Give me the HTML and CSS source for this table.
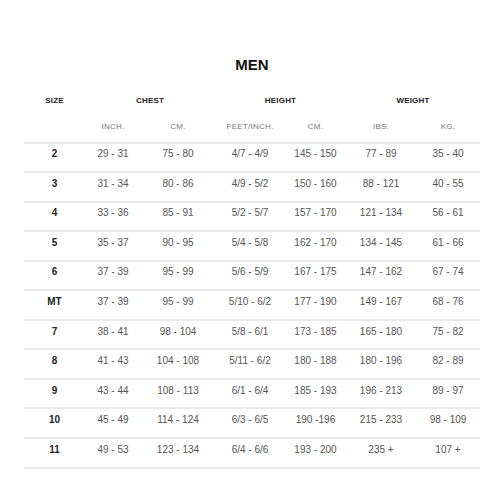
FILE: index.html
```html
<!DOCTYPE html>
<html>
<head>
<meta charset="utf-8">
<link rel="stylesheet" href="styles.css">
</head>
<body>
<div class="chart">
  <h1 class="title">MEN</h1>
  <div class="row head">
    <div>SIZE</div>
    <div class="span2">CHEST</div>
    <div class="span2">HEIGHT</div>
    <div class="span2">WEIGHT</div>
  </div>
  <div class="row sub">
    <div></div>
    <div>INCH.</div>
    <div>CM.</div>
    <div>FEET/INCH.</div>
    <div>CM.</div>
    <div>IBS.</div>
    <div>KG.</div>
  </div>
  <div class="body">
    <div class="row data"><div class="size">2</div><div>29 - 31</div><div>75 - 80</div><div>4/7 - 4/9</div><div>145 - 150</div><div>77 - 89</div><div>35 - 40</div></div>
    <div class="row data"><div class="size">3</div><div>31 - 34</div><div>80 - 86</div><div>4/9 - 5/2</div><div>150 - 160</div><div>88 - 121</div><div>40 - 55</div></div>
    <div class="row data"><div class="size">4</div><div>33 - 36</div><div>85 - 91</div><div>5/2 - 5/7</div><div>157 - 170</div><div>121 - 134</div><div>56 - 61</div></div>
    <div class="row data"><div class="size">5</div><div>35 - 37</div><div>90 - 95</div><div>5/4 - 5/8</div><div>162 - 170</div><div>134 - 145</div><div>61 - 66</div></div>
    <div class="row data"><div class="size">6</div><div>37 - 39</div><div>95 - 99</div><div>5/6 - 5/9</div><div>167 - 175</div><div>147 - 162</div><div>67 - 74</div></div>
    <div class="row data"><div class="size">MT</div><div>37 - 39</div><div>95 - 99</div><div>5/10 - 6/2</div><div>177 - 190</div><div>149 - 167</div><div>68 - 76</div></div>
    <div class="row data"><div class="size">7</div><div>38 - 41</div><div>98 - 104</div><div>5/8 - 6/1</div><div>173 - 185</div><div>165 - 180</div><div>75 - 82</div></div>
    <div class="row data"><div class="size">8</div><div>41 - 43</div><div>104 - 108</div><div>5/11 - 6/2</div><div>180 - 188</div><div>180 - 196</div><div>82 - 89</div></div>
    <div class="row data"><div class="size">9</div><div>43 - 44</div><div>108 - 113</div><div>6/1 - 6/4</div><div>185 - 193</div><div>196 - 213</div><div>89 - 97</div></div>
    <div class="row data"><div class="size">10</div><div>45 - 49</div><div>114 - 124</div><div>6/3 - 6/5</div><div>190 -196</div><div>215 - 233</div><div>98 - 109</div></div>
    <div class="row data last"><div class="size">11</div><div>49 - 53</div><div>123 - 134</div><div>6/4 - 6/6</div><div>193 - 200</div><div>235 +</div><div>107 +</div></div>
  </div>
</div>
</body>
</html>
```

FILE: styles.css
```css
html, body {
  margin: 0;
  padding: 0;
  background: #ffffff;
}

body {
  font-family: "Liberation Sans", Arial, sans-serif;
}

.chart {
  width: 456px;
  margin: 0 0 0 24px;
}

.title {
  margin: 56px 0 0;
  font-size: 15px;
  line-height: 18px;
  font-weight: bold;
  color: #111;
  text-align: center;
}

.row {
  display: grid;
  grid-template-columns: 61px 56px 74px 70px 61px 70px 64px;
  text-align: center;
}

.head {
  margin-top: 22px;
  font-size: 8px;
  line-height: 10px;
  font-weight: bold;
  color: #222;
  letter-spacing: 0.2px;
}

.head .span2 {
  grid-column: span 2;
}

.sub {
  margin-top: 16px;
  font-size: 8px;
  line-height: 10px;
  color: #777;
  letter-spacing: 0.25px;
}

.body {
  margin-top: 9.5px;
}

.data {
  box-sizing: border-box;
  height: 29.55px;
  padding-top: 4.8px;
  border-top: 2px solid #eaeaea;
  font-size: 10px;
  line-height: 12px;
  color: #555;
}

.data.last {
  height: 31.55px;
  border-bottom: 2px solid #eaeaea;
}

.data .size {
  font-weight: bold;
  color: #222;
}
```
